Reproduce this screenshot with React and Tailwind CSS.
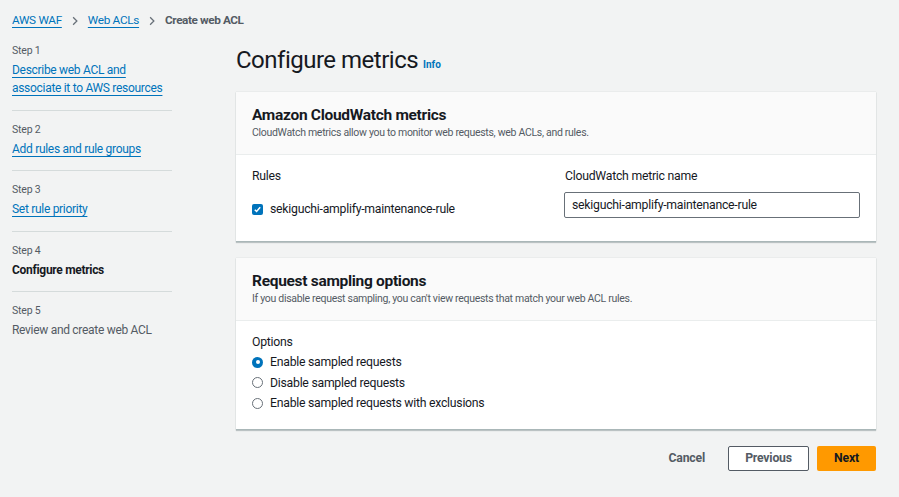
import React from "react";

const font = { fontFamily: 'Roboto, "Noto Sans", Arial, sans-serif' };

function Chevron() {
  return (
    <svg width="10" height="10" viewBox="0 0 16 16" className="mx-[8px]">
      <path d="M5 2l6 6-6 6" fill="none" stroke="#687078" strokeWidth="2" />
    </svg>
  );
}

function Step({ n, label, link, current, last }) {
  return (
    <div className={`pb-[12.5px] ${last ? "" : "border-b border-[#d5dbdb]"} mb-[12px]`}>
      <div className="text-[10.5px] tracking-[-0.2px] text-[#545b64] leading-[14px]">Step {n}</div>
      <div className="mt-[3px] text-[12px] tracking-[-0.3px] leading-[18px] whitespace-nowrap">
        {link ? (
          <span className="text-[#0073bb] underline underline-offset-[3px]">{label}</span>
        ) : current ? (
          <span className="font-bold text-[#16191f]">{label}</span>
        ) : (
          <span className="text-[#545b64]">{label}</span>
        )}
      </div>
    </div>
  );
}

function Radio({ checked, label }) {
  return (
    <div className="flex items-center h-[20.5px]">
      {checked ? (
        <span className="w-[11px] h-[11px] rounded-full bg-[#0073bb] flex items-center justify-center mr-[7px]">
          <span className="w-[4px] h-[4px] rounded-full bg-white" />
        </span>
      ) : (
        <span className="w-[11px] h-[11px] rounded-full border border-[#687078] bg-white mr-[7px]" />
      )}
      <span className="text-[12.25px] tracking-[-0.25px] text-[#16191f]">{label}</span>
    </div>
  );
}

export default function App() {
  return (
    <div style={font} className="w-[899px] h-[497px] bg-[#f2f3f3] overflow-hidden text-[#16191f]">
      <div className="flex items-center pl-[12px] pt-[12px] h-[30px] text-[11.75px] tracking-[-0.3px]">
        <span className="text-[#0073bb] underline underline-offset-[3px]">AWS WAF</span>
        <Chevron />
        <span className="text-[#0073bb] underline underline-offset-[3px]">Web ACLs</span>
        <Chevron />
        <span className="text-[#545b64] font-bold tracking-[-0.4px]">Create web ACL</span>
      </div>
      <div className="flex">
        <div className="w-[160px] ml-[12px] pt-[14px]">
          <Step n={1} link label={<>Describe web ACL and<br />associate it to AWS resources</>} />
          <Step n={2} link label="Add rules and rule groups" />
          <Step n={3} link label="Set rule priority" />
          <Step n={4} current label="Configure metrics" />
          <Step n={5} last label="Review and create web ACL" />
        </div>
        <div className="ml-[64px] w-[640px]">
          <div className="flex items-end h-[46px] pt-[4px]">
            <h1 className="text-[24px] tracking-[-0.5px] leading-[32px] text-[#16191f]">Configure metrics</h1>
            <span className="ml-[5px] mb-[4px] text-[10px] font-bold text-[#0073bb]">Info</span>
          </div>
          <div className="mt-[16px] bg-white border-b border-[#aab7b8] shadow-[0_1px_1px_rgba(0,28,36,0.2),0_0_1px_rgba(0,28,36,0.2)]">
            <div className="bg-[#fafafa] border-b border-[#eaeded] px-[16px] pt-[13px] h-[63px]">
              <div className="text-[15.5px] tracking-[-0.3px] font-bold leading-[20px]">Amazon CloudWatch metrics</div>
              <div className="text-[10.5px] tracking-[-0.3px] text-[#545b64] leading-[14px] mt-[1px]">CloudWatch metrics allow you to monitor web requests, web ACLs, and rules.</div>
            </div>
            <div className="flex px-[16px] pt-[13px] h-[86px]">
              <div className="w-[313px]">
                <div className="text-[12.25px] tracking-[-0.25px] leading-[16px]">Rules</div>
                <div className="flex items-center mt-[16px]">
                  <span className="w-[11px] h-[11px] rounded-[2px] bg-[#0073bb] flex items-center justify-center mr-[7px]">
                    <svg width="9" height="9" viewBox="0 0 10 10"><path d="M2 5.2l2 2 4-4.6" fill="none" stroke="white" strokeWidth="1.7" /></svg>
                  </span>
                  <span className="text-[12.25px] tracking-[-0.25px]">sekiguchi-amplify-maintenance-rule</span>
                </div>
              </div>
              <div className="flex-1">
                <div className="text-[12.25px] tracking-[-0.25px] leading-[16px] ml-[1px]">CloudWatch metric name</div>
                <div className="mt-[8px] w-[296px] h-[26px] border border-[#687078] rounded-[2px] bg-white flex items-center px-[7px] text-[12.25px] tracking-[-0.25px]">
                  sekiguchi-amplify-maintenance-rule
                </div>
              </div>
            </div>
          </div>
          <div className="mt-[16px] bg-white border-b border-[#aab7b8] shadow-[0_1px_1px_rgba(0,28,36,0.2),0_0_1px_rgba(0,28,36,0.2)]">
            <div className="bg-[#fafafa] border-b border-[#eaeded] px-[16px] pt-[13px] h-[63px]">
              <div className="text-[15.5px] tracking-[-0.3px] font-bold leading-[20px]">Request sampling options</div>
              <div className="text-[10.5px] tracking-[-0.3px] text-[#545b64] leading-[14px] mt-[1px]">If you disable request sampling, you can't view requests that match your web ACL rules.</div>
            </div>
            <div className="px-[16px] pt-[13px] h-[108px]">
              <div className="text-[12.25px] tracking-[-0.25px] leading-[16px] mb-[2px]">Options</div>
              <Radio checked label="Enable sampled requests" />
              <Radio label="Disable sampled requests" />
              <Radio label="Enable sampled requests with exclusions" />
            </div>
          </div>
          <div className="flex justify-end items-center mt-[16px] text-[12.25px] tracking-[-0.2px] font-bold">
            <span className="text-[#545b64] mr-[23px]">Cancel</span>
            <span className="w-[81px] h-[25px] border border-[#545b64] rounded-[2px] bg-white text-[#545b64] flex items-center justify-center mr-[8px]">Previous</span>
            <span className="w-[59px] h-[25px] rounded-[2px] bg-[#ff9900] text-[#16191f] flex items-center justify-center">Next</span>
          </div>
        </div>
      </div>
    </div>
  );
}
